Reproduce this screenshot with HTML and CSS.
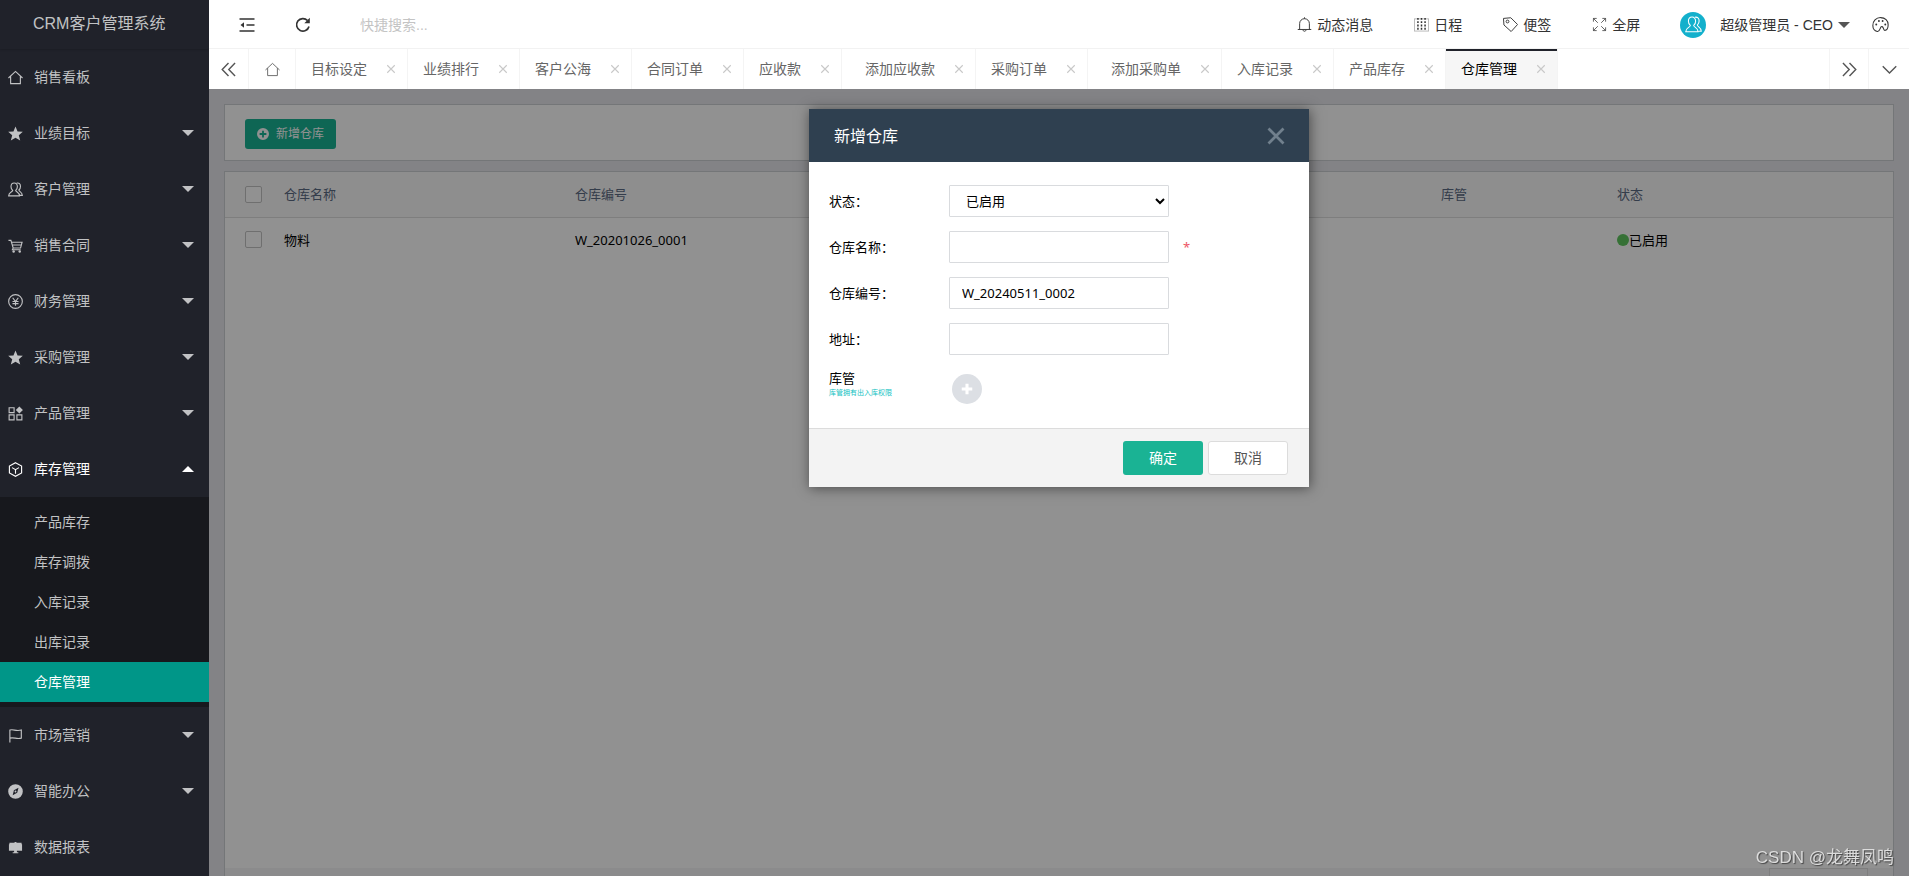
FILE: index.html
```html
<!DOCTYPE html>
<html lang="zh-CN">
<head>
<meta charset="utf-8">
<title>CRM客户管理系统</title>
<link rel="stylesheet" href="styles.css">
</head>
<body>
<svg class="defs" aria-hidden="true">
  <symbol id="home" viewBox="0 0 16 16"><path d="M.5 8.500 8 1.500l7.500 7M2.800 6.500v8h10.400v-8"/></symbol>
  <symbol id="star" viewBox="0 0 16 16"><path class="solid" d="M8 .5 10.200 5.800l5.600.4-4.300 3.600 1.500 5.700L8 12.400l-5 3.100 1.500-5.700L.2 6.200l5.600-.4z"/></symbol>
  <symbol id="user" viewBox="0 0 16 16"><path d="M6.600 1C4.500 1 3.200 2.700 3.200 5c0 1.800.8 3 1.800 3.900C4.800 10.800.8 11 .7 14.800h11.600c0-3.800-3.900-4-4.100-5.900 1-.9 1.800-2.100 1.800-3.900 0-2.300-1.300-4-3.400-4zM9.300 1.200c2.500-.6 4 1.100 4 3.500 0 1.800-.8 3-1.700 3.800.1 1.800 3.500 2 3.700 5.800h-2.600"/></symbol>
  <symbol id="cart" viewBox="0 0 16 16"><path d="M.5 2.500h2.600l2.400 8.200h7.900L15 4.500H4M5.500 10.700l-.8 1.800h8.800M4.500 7.500H14"/><circle class="solid" cx="6" cy="14.300" r="1.300"/><circle class="solid" cx="12.500" cy="14.300" r="1.300"/></symbol>
  <symbol id="yen" viewBox="0 0 16 16"><circle cx="8" cy="8" r="7.300"/><path d="m5 4 3 4 3-4M4.800 8h6.400M4.800 10.200h6.400M8 8v4.500"/></symbol>
  <symbol id="apps" viewBox="0 0 16 16"><path d="M1.200 1.800h5.300v5.300H1.200zM1.200 9.500h5.300v5.300H1.200zM9.500 9.500h5.300v5.300H9.500z"/><path class="solid" d="M12.100.5 15.900 4.300 12.100 8.100 8.300 4.300z"/></symbol>
  <symbol id="cube" viewBox="0 0 16 16"><path d="m8 .8 6.500 3.500v7.400L8 15.200l-6.500-3.500V4.300zM4.300 6 8 8.200 11.700 6M8 8.200v4.300"/></symbol>
  <symbol id="flag" viewBox="0 0 16 16"><path d="M2 15.500V2.200c4-1.300 6 1.600 12.200 0v8.600c-5.200 1.600-7.700-1.400-12.200 0"/></symbol>
  <symbol id="compass" viewBox="0 0 16 16"><path class="solid" fill-rule="evenodd" d="M8 .2a7.800 7.800 0 1 0 0 15.600A7.800 7.800 0 0 0 8 .2zM11.200 4 9.800 9.400 5 12l1.300-5.300zM8 7a1 1 0 1 1 0 2 1 1 0 0 1 0-2z"/></symbol>
  <symbol id="board" viewBox="0 0 16 16"><path class="solid" d="M7 2h2v1h5.500v1.500h.5v7H9.500V13H11v1.200H5V13h1.500v-1.500H1v-7h.5V3H7z"/></symbol>
  <symbol id="fold" viewBox="0 0 16 16"><path stroke-width="1.600" d="M.5 2h15M7.500 8h8M.5 14h15"/><path class="solid" d="M5 5.300v5.400L1.500 8z"/></symbol>
  <symbol id="refresh" viewBox="0 0 16 16"><path stroke-width="1.700" d="M14 9.500A6.300 6.300 0 1 1 12.500 3.500"/><path class="solid" d="M14.800.8v5.400H9.300z"/></symbol>
  <symbol id="bell" viewBox="0 0 16 16"><path d="M.8 13.300h14.400M2.800 13.300V7a5.200 5.200 0 0 1 10.400 0v6.300M8 1.800V.3M6.300 14a1.800 1.800 0 0 0 3.400 0"/></symbol>
  <symbol id="calendar" viewBox="0 0 16 16"><rect x=".5" y="2" width="15" height="13" stroke-opacity=".35"/><path stroke-width="1.600" stroke-dasharray="2 1.500" d="M4.200 1v13M8 1v13M11.800 1v13"/></symbol>
  <symbol id="tag" viewBox="0 0 16 16"><path d="M.5 1.500 1 8.500 8.700 15.500 15.500 8 8.300.8z"/><circle cx="4.800" cy="4.800" r="1.500"/></symbol>
  <symbol id="full" viewBox="0 0 16 16"><path stroke-width=".8" d="M1.500 5V1.500H5M11 1.500h3.500V5M14.500 11v3.500H11M5 14.500H1.500V11M1.500 1.500l4.700 4.700M14.500 1.500 9.800 6.200M14.500 14.500 9.800 9.800M1.500 14.500l4.700-4.700"/></symbol>
  <symbol id="palette" viewBox="0 0 16 16"><path d="M5 14.500C2 14 .8 11.500.8 9A7.200 7.200 0 0 1 8 1.500c4.500 0 7.200 3 7.200 6.700 0 3-1 5.300-3.200 5.300-1.500 0-.8-3-2.500-3.500-2.300-.6-1.300 5-4.500 4.500z"/><circle class="solid" cx="4" cy="8" r=".9"/><circle class="solid" cx="6.500" cy="4.700" r=".9"/><circle class="solid" cx="10" cy="4.700" r=".9"/><circle class="solid" cx="12.500" cy="8" r=".9"/></symbol>
  <symbol id="left" viewBox="0 0 16 16"><path d="M8 1 1.300 8 8 15M15 1 8.300 8l6.700 7"/></symbol>
  <symbol id="right" viewBox="0 0 16 16"><path d="M8 1l6.700 7L8 15M1 1l6.700 7L1 15"/></symbol>
  <symbol id="down" viewBox="0 0 16 16"><path d="m.8 4.500 7.200 7.200 7.200-7.200"/></symbol>
  <symbol id="close" viewBox="0 0 16 16"><path d="m2 2 12 12M14 2 2 14"/></symbol>
  <symbol id="plus" viewBox="0 0 16 16"><path class="solid" fill-rule="evenodd" d="M8 0a8 8 0 1 0 0 16A8 8 0 0 0 8 0zM6.800 3.500h2.400v3.300h3.300v2.400H9.200v3.300H6.800V9.200H3.500V6.800h3.300z"/></symbol>
</svg>

<div class="app">
  <aside class="side">
    <div class="brand">CRM客户管理系统</div>
    <nav class="menu">
      <a href="#"><svg><use href="#home"/></svg>销售看板</a>
      <a href="#" class="more"><svg><use href="#star"/></svg>业绩目标</a>
      <a href="#" class="more"><svg><use href="#user"/></svg>客户管理</a>
      <a href="#" class="more"><svg><use href="#cart"/></svg>销售合同</a>
      <a href="#" class="more"><svg><use href="#yen"/></svg>财务管理</a>
      <a href="#" class="more"><svg><use href="#star"/></svg>采购管理</a>
      <a href="#" class="more"><svg><use href="#apps"/></svg>产品管理</a>
      <a href="#" class="more open"><svg><use href="#cube"/></svg>库存管理</a>
      <div class="submenu">
        <a href="#">产品库存</a>
        <a href="#">库存调拨</a>
        <a href="#">入库记录</a>
        <a href="#">出库记录</a>
        <a href="#" class="current">仓库管理</a>
      </div>
      <a href="#" class="more"><svg><use href="#flag"/></svg>市场营销</a>
      <a href="#" class="more"><svg><use href="#compass"/></svg>智能办公</a>
      <a href="#"><svg><use href="#board"/></svg>数据报表</a>
    </nav>
  </aside>

  <div class="main">
    <header class="top">
      <button class="tool" aria-label="收起菜单"><svg><use href="#fold"/></svg></button>
      <button class="tool" aria-label="刷新"><svg><use href="#refresh"/></svg></button>
      <input class="search" type="text" placeholder="快捷搜索..." aria-label="快捷搜索">
      <div class="links">
        <a href="#"><svg><use href="#bell"/></svg>动态消息</a>
        <a href="#"><svg><use href="#calendar"/></svg>日程</a>
        <a href="#"><svg><use href="#tag"/></svg>便签</a>
        <a href="#"><svg><use href="#full"/></svg>全屏</a>
      </div>
      <a href="#" class="account"><span class="avatar"><svg><use href="#user"/></svg></span>超级管理员 - CEO<i class="caret"></i></a>
      <button class="theme" aria-label="主题"><svg><use href="#palette"/></svg></button>
    </header>

    <div class="tabs">
      <button class="step" aria-label="向左"><svg><use href="#left"/></svg></button>
      <button class="hometab" aria-label="主页"><svg><use href="#home"/></svg></button>
      <a href="#" class="tab">目标设定<svg><use href="#close"/></svg></a>
      <a href="#" class="tab">业绩排行<svg><use href="#close"/></svg></a>
      <a href="#" class="tab">客户公海<svg><use href="#close"/></svg></a>
      <a href="#" class="tab">合同订单<svg><use href="#close"/></svg></a>
      <a href="#" class="tab">应收款<svg><use href="#close"/></svg></a>
      <a href="#" class="tab wide">添加应收款<svg><use href="#close"/></svg></a>
      <a href="#" class="tab">采购订单<svg><use href="#close"/></svg></a>
      <a href="#" class="tab wide">添加采购单<svg><use href="#close"/></svg></a>
      <a href="#" class="tab">入库记录<svg><use href="#close"/></svg></a>
      <a href="#" class="tab">产品库存<svg><use href="#close"/></svg></a>
      <a href="#" class="tab active">仓库管理<svg><use href="#close"/></svg></a>
      <button class="step end" aria-label="向右"><svg><use href="#right"/></svg></button>
      <button class="step last" aria-label="更多"><svg><use href="#down"/></svg></button>
    </div>

    <main class="page">
      <section class="card bar">
        <button class="add"><svg><use href="#plus"/></svg>新增仓库</button>
      </section>
      <section class="card list">
        <table>
          <colgroup><col class="c-check"><col class="c-name"><col class="c-code"><col class="c-keeper"><col class="c-state"></colgroup>
          <thead>
            <tr><th><input type="checkbox" aria-label="全选"></th><th>仓库名称</th><th>仓库编号</th><th>库管</th><th>状态</th></tr>
          </thead>
          <tbody>
            <tr><td><input type="checkbox" aria-label="选择物料"></td><td>物料</td><td>W_20201026_0001</td><td></td><td><span class="state"><i class="dot"></i>已启用</span></td></tr>
          </tbody>
        </table>
        <div class="pager"><span class="pagebox"></span></div>
      </section>
      <div class="shade">
        <form class="modal" role="dialog" aria-label="新增仓库">
          <div class="modal-head">新增仓库<button type="button" class="x" aria-label="关闭"><svg><use href="#close"/></svg></button></div>
          <div class="modal-body">
            <label for="state">状态：</label>
            <select id="state"><option>已启用</option></select><span></span>
            <label for="name">仓库名称：</label>
            <input id="name" type="text"><span class="must">*</span>
            <label for="code">仓库编号：</label>
            <input id="code" type="text" value="W_20240511_0002"><span></span>
            <label for="addr">地址：</label>
            <input id="addr" type="text"><span></span>
            <div class="keeper">库管<small>库管拥有出入库权限</small></div>
            <button type="button" class="pick" aria-label="添加库管"><svg viewBox="0 0 16 16"><path d="M8 2v12M2 8h12"/></svg></button>
          </div>
          <div class="modal-foot">
            <button type="button" class="ok">确定</button>
            <button type="button" class="cancel">取消</button>
          </div>
        </form>
      </div>
    </main>
  </div>
</div>
<div class="mark">CSDN @龙舞凤鸣</div>
</body>
</html>
```

FILE: styles.css
```css
* { box-sizing: border-box; }
body {
  margin: 0;
  font: 14px/20px "Liberation Sans", "Noto Sans CJK SC", sans-serif;
  color: #333;
}
a { color: inherit; text-decoration: none; }
button, input, select { font: inherit; color: inherit; margin: 0; }
button { border: 0; padding: 0; background: none; display: flex; align-items: center; justify-content: center; }
svg { width: 14px; height: 14px; flex: none; fill: none; stroke: currentColor; stroke-width: 1; }
.solid { fill: currentColor; stroke: none; }
.defs { display: none; }

.app { display: flex; height: 100vh; overflow: hidden; }

.side { width: 209px; flex: none; background: #20222a; color: #c1c2c4; overflow: hidden; }
.brand { height: 49px; line-height: 48px; font-size: 16px; padding-left: 33px; box-shadow: 0 1px 2px rgba(0, 0, 0, .15); }
.menu a { display: flex; align-items: center; height: 56px; padding: 0 15px 0 8px; }
.menu svg { width: 15px; height: 15px; margin-right: 11px; stroke-width: 1.200; }
.more::after { content: ""; margin-left: auto; border: 6px solid transparent; border-top-color: currentColor; border-bottom: 0; }
.more.open { color: #fff; }
.more.open::after { border-top: 0; border-bottom: 6px solid currentColor; }
.submenu { background: #17181d; padding: 5px 0; }
.menu .submenu a { height: 40px; padding-left: 34px; }
.menu .submenu .current { background: #009688; color: #fff; }

.main { flex: 1; min-width: 0; display: flex; flex-direction: column; }
.top { height: 49px; flex: none; display: flex; align-items: center; background: #fff; border-bottom: 1px solid #f2f2f2; padding: 1px 20px 0 10px; }
.tool { width: 56px; height: 48px; }
.tool svg { width: 16px; height: 16px; }
.search { width: 200px; margin-left: 29px; border: 0; padding: 0; outline: 0; }
.search::placeholder { color: #c4c4c4; }
.links { margin-left: auto; display: flex; gap: 41px; }
.links a { display: flex; align-items: center; gap: 5px; }
.links svg { width: 15px; height: 15px; }
.account { display: flex; align-items: center; margin-left: 40px; }
.avatar { width: 26px; height: 26px; border-radius: 50%; background: #13b0cc; color: #fff; display: flex; align-items: center; justify-content: center; margin-right: 14px; }
.avatar svg { width: 17px; height: 17px; }
.caret { border: 6px solid transparent; border-top-color: #555; border-bottom: 0; margin-left: 5px; }
.theme { margin-left: 22px; }
.theme svg { width: 17px; height: 17px; }

.tabs { height: 40px; flex: none; display: flex; background: #fff; color: #666; }
.step { width: 40px; border-right: 1px solid #f4f4f4; }
.step.end { margin-left: auto; border-left: 1px solid #f4f4f4; }
.step.last { border: 0; }
.hometab { width: 47px; border-right: 1px solid #f4f4f4; }
.step svg, .hometab svg { width: 15px; height: 15px; }
.step svg { stroke-width: 1.500; color: #555; }
.tab { display: flex; align-items: center; padding: 0 11px 0 15px; border-right: 1px solid #f4f4f4; white-space: nowrap; }
.tab.wide { padding-left: 23px; }
.tab svg { width: 10px; height: 10px; margin-left: 19px; color: #c8c8c8; stroke-width: 1.800; }
.tab.active { background: #f6f6f6; color: #000; box-shadow: inset 0 2px #20222a; }

.page { flex: 1; min-height: 0; position: relative; display: flex; flex-direction: column; gap: 10px; padding: 15px 15px 0; background: #e6e7ec; font-family: "Noto Sans", "Noto Sans CJK SC", sans-serif; font-size: 13px; }
.card { background: #fff; border: 1px solid #cdcfd3; }
.bar { padding: 14px 20px 11px; }
.add { height: 30px; padding: 0 12px; gap: 7px; border-radius: 3px; background: #1ab394; color: #fff; font-size: 12px; }
.add svg { width: 12px; height: 12px; }
.list { flex: 1; border-bottom: 0; display: flex; flex-direction: column; justify-content: space-between; }
table { width: 100%; table-layout: fixed; border-collapse: collapse; color: #000; }
th, td { height: 45px; padding: 0; text-align: left; font-weight: 400; }
th { background: #fafafa; color: #5c6b84; border-bottom: 1px solid #dedede; }
th:first-child, td:first-child { padding-left: 20px; }
.c-check { width: 59px; }
.c-name { width: 291px; }
.c-keeper { width: 176px; }
.c-state { width: 276px; }
table input { appearance: none; display: block; width: 17px; height: 17px; border: 1px solid #c4c4c4; border-radius: 2px; background: #fff; }
.state { display: flex; align-items: center; }
.dot { width: 12px; height: 12px; border-radius: 50%; background: #5fc75f; }
.pager { height: 8px; background: #f4f4f6; padding-right: 25px; display: flex; justify-content: flex-end; }
.pagebox { width: 99px; border: 1px solid #ddd; border-bottom: 0; }

.shade { position: absolute; inset: 0; background: rgba(0, 0, 0, .43); display: flex; justify-content: center; align-items: flex-start; padding-top: 20px; }
.modal { width: 500px; background: #fff; color: #000; box-shadow: 1px 1px 12px rgba(0, 0, 0, .5); }
.modal-head { height: 53px; display: flex; align-items: center; justify-content: space-between; padding: 0 23px 0 25px; background: #2f4050; color: #fff; font-size: 16px; }
.x svg { width: 20px; height: 20px; color: #71808d; stroke-width: 2.200; }
.modal-body { display: grid; grid-template-columns: 120px 220px 1fr; row-gap: 14px; align-items: center; padding: 23px 20px 24px; }
.modal-body input, .modal-body select { width: 100%; height: 32px; border: 1px solid #d9dbde; border-radius: 1px; background: #fff; padding: 0 12px; outline: 0; }
.modal-body select { padding: 0 0 0 12px; }
.must { color: #ed5565; padding-left: 14px; }
.keeper { align-self: start; line-height: 18px; }
.keeper small { display: block; font-size: 7px; line-height: 12px; color: #13c2c2; }
.pick { width: 30px; height: 30px; border-radius: 50%; background: #dcdfe4; color: #fff; margin: 5px 3px 0; }
.pick svg { stroke-width: 3.500; }
.modal-foot { display: flex; justify-content: flex-end; gap: 5px; padding: 12px 21px; background: #f3f3f3; border-top: 1px solid #dcdcdc; font-size: 14px; }
.modal-foot button { width: 80px; height: 34px; border-radius: 3px; }
.ok { background: #1ab394; color: #fff; }
.cancel { background: #fff; border: 1px solid #dcdcdc; color: #555; }

.mark { position: fixed; right: 15px; bottom: 6px; font-size: 17px; line-height: 24px; color: #dcdcdc; text-shadow: 1px 1px 1px #444; }
```
